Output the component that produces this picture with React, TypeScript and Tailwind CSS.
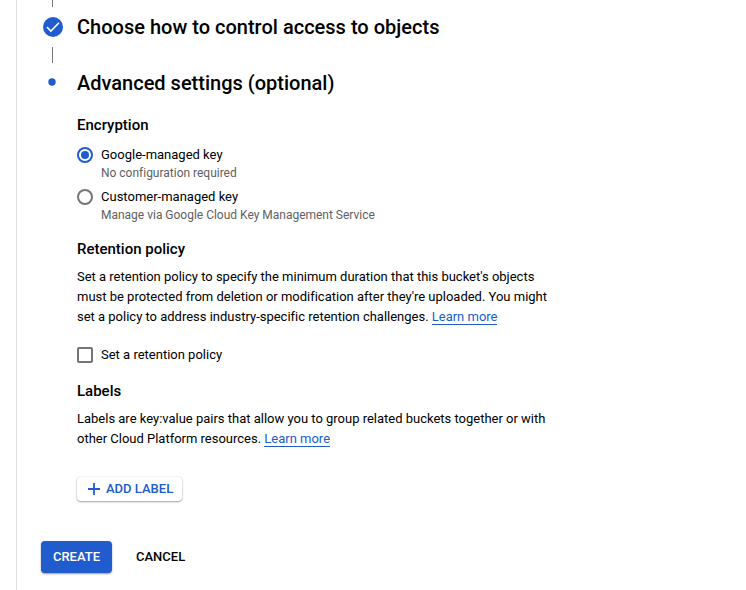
import React from 'react';

function Radio({ checked }: { checked?: boolean }) {
  return (
    <span className={`mt-[3px] flex h-4 w-4 shrink-0 items-center justify-center rounded-full border-2 ${checked ? 'border-[#205ccd]' : 'border-[#757575]'}`}>
      {checked && <span className="h-2 w-2 rounded-full bg-[#205ccd]" />}
    </span>
  );
}

function Option({ title, hint, checked }: { title: string; hint: string; checked?: boolean }) {
  return (
    <div className="flex h-[42px] gap-2">
      <Radio checked={checked} />
      <div>
        <div className="text-[13px] leading-[22px]">{title}</div>
        <div className="text-xs leading-[15px] tracking-[-0.01px] text-[#616161]">{hint}</div>
      </div>
    </div>
  );
}

function LearnMore() {
  return <a className="border-b border-[#205ccd] text-[#205ccd]">Learn more</a>;
}

export default function App() {
  return (
    <div className="h-[590px] w-[746px] overflow-hidden bg-white pl-4 font-[Roboto,sans-serif] text-black">
      <main className="flex h-full flex-col border-l border-[#e0e0e0] pl-6">
        <div className="flex">
          <div className="flex w-9 shrink-0 flex-col">
            <span className="ml-[11px] h-[7px] w-px bg-[#757575]" />
            <svg className="mt-[9px] ml-px h-[22px] w-[22px]" viewBox="0 0 22 22">
              <circle cx="11" cy="11" r="10" fill="#205ccd" />
              <path d="M5 11.1l3.9 3.9 8.1-8.2" fill="none" stroke="white" strokeWidth="1.6" />
            </svg>
            <span className="mt-[9px] ml-[11px] h-4 w-px bg-[#757575]" />
            <svg className="mt-[15px] ml-[7px] h-2 w-2" viewBox="0 0 8 8">
              <circle cx="4" cy="4" r="3.7" fill="#205ccd" />
            </svg>
          </div>
          <div className="text-xl leading-7 font-medium">
            <h2 className="mt-[13px] tracking-[0.01px]">Choose how to control access to objects</h2>
            <h2 className="mt-7">Advanced settings (optional)</h2>
          </div>
        </div>
        <div className="ml-9 pt-[18px] text-[13px] leading-5">
          <h3 className="text-[15px] leading-5 font-medium">Encryption</h3>
          <div className="mt-[9px]">
            <Option title="Google-managed key" hint="No configuration required" checked />
            <Option title="Customer-managed key" hint="Manage via Google Cloud Key Management Service" />
          </div>
          <h3 className="mt-[11px] text-[15px] leading-5 font-medium">Retention policy</h3>
          <p className="mt-2 tracking-[-0.008px] whitespace-nowrap">
            Set a retention policy to specify the minimum duration that this bucket's objects<br />
            must be protected from deletion or modification after they're uploaded. You might<br />
            set a policy to address industry-specific retention challenges. <LearnMore />
          </p>
          <div className="mt-[18px] flex items-center gap-2">
            <span className="h-4 w-4 rounded-[2px] border-2 border-[#757575]" />
            Set a retention policy
          </div>
          <h3 className="mt-4 text-[15px] leading-5 font-medium">Labels</h3>
          <p className="mt-2 tracking-[-0.008px] whitespace-nowrap">
            Labels are key:value pairs that allow you to group related buckets together or with<br />
            other Cloud Platform resources. <LearnMore />
          </p>
          <button className="mt-7 flex h-6 w-[105px] items-center rounded-[4px] pl-[11px] text-[13px] font-medium whitespace-nowrap text-[#205ccd] shadow-[0_1px_2px_rgba(0,0,0,0.35),0_0_2px_rgba(0,0,0,0.12)]">
            <svg className="mr-[6px] h-3 w-3" viewBox="0 0 12 12" stroke="currentColor" strokeWidth="1.8"><path d="M6 0v12M0 6h12" /></svg>
            ADD LABEL
          </button>
        </div>
        <div className="mt-10 flex items-center text-[13px] font-medium">
          <button className="h-8 w-[71px] rounded-[4px] bg-[#205ccd] text-white shadow-[0_1px_2px_rgba(0,0,0,0.4)]">CREATE</button>
          <button className="ml-6">CANCEL</button>
        </div>
      </main>
    </div>
  );
}
